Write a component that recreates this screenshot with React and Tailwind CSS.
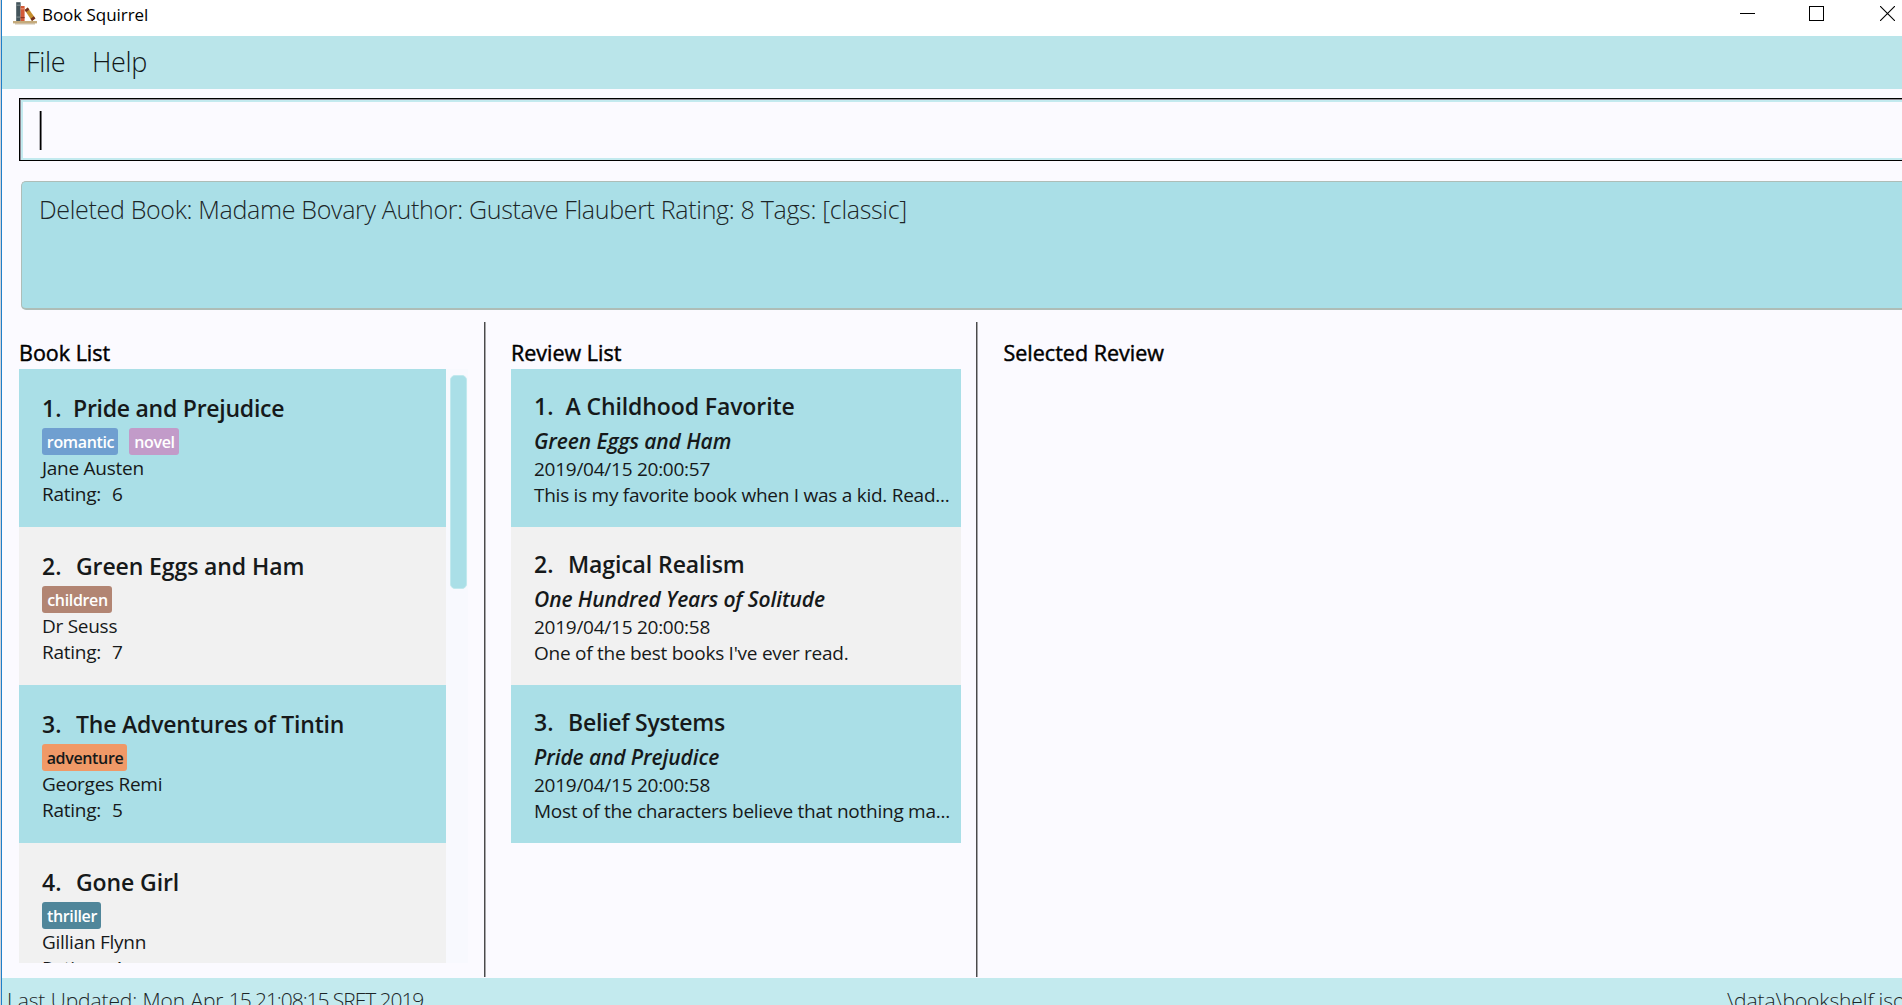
import React from "react";

const books = [
  {
    id: 1,
    title: "Pride and Prejudice",
    titleStyle: "tracking-[-0.25px]",
    author: "Jane Austen",
    rating: 6,
    tags: [
      { name: "romantic", style: "w-[76px] bg-[#6f9fd0] text-white" },
      { name: "novel", style: "w-[50px] bg-[#c29bc9] text-white" },
    ],
  },
  {
    id: 2,
    title: "Green Eggs and Ham",
    titleStyle: "tracking-[-0.1px]",
    author: "Dr Seuss",
    rating: 7,
    tags: [{ name: "children", style: "w-[70px] bg-[#b28573] text-white" }],
  },
  {
    id: 3,
    title: "The Adventures of Tintin",
    titleStyle: "tracking-[-0.2px]",
    author: "Georges Remi",
    rating: 5,
    tags: [{ name: "adventure", style: "w-[85px] bg-[#f09967] text-[#16191a]" }],
  },
  {
    id: 4,
    title: "Gone Girl",
    titleStyle: "tracking-[-0.1px]",
    author: "Gillian Flynn",
    rating: 4,
    tags: [{ name: "thriller", style: "w-[59px] bg-[#50869a] text-white" }],
  },
];

const reviews = [
  {
    id: 1,
    title: "A Childhood Favorite",
    titleStyle: "tracking-[-0.1px]",
    book: "Green Eggs and Ham",
    date: "2019/04/15 20:00:57",
    text: "This is my favorite book when I was a kid. Read...",
  },
  {
    id: 2,
    title: "Magical Realism",
    titleStyle: "tracking-[-0.1px]",
    book: "One Hundred Years of Solitude",
    date: "2019/04/15 20:00:58",
    text: "One of the best books I've ever read.",
  },
  {
    id: 3,
    title: "Belief Systems",
    titleStyle: "tracking-[-0.25px]",
    book: "Pride and Prejudice",
    date: "2019/04/15 20:00:58",
    text: "Most of the characters believe that nothing ma...",
  },
];

function rowColor(index) {
  return index % 2 === 0 ? "bg-[#aadfe7]" : "bg-[#f1f1f1]";
}

function BookshelfIcon() {
  return (
    <svg className="h-6 w-6 shrink-0" viewBox="0 0 24 24">
      <rect x="0" y="20" width="24" height="2.4" fill="#c5ab7c" />
      <rect x="2" y="22.4" width="20" height="1" fill="#a9936d" opacity="0.7" />
      <rect x="3.2" y="1.2" width="4.4" height="18.8" fill="#43545b" />
      <rect x="3.2" y="3.6" width="4.4" height="1.2" fill="#78878b" />
      <rect x="3.2" y="15.5" width="4.4" height="1.2" fill="#78878b" />
      <rect x="7.6" y="5" width="4" height="15" fill="#d35a36" />
      <rect x="7.6" y="7.2" width="4" height="1.2" fill="#e89072" />
      <rect x="7.6" y="16" width="4" height="1.2" fill="#8e3522" />
      <path d="M11.6 9 14.8 6.6l7.6 10.8-3.4 2.5z" fill="#c58f2e" />
      <path d="M11.6 9 14.8 6.6l1.5 2.2-3.1 2.3zM17.5 17.7l3.4-2.4 1.5 2.1-3.4 2.5z" fill="#73301f" />
    </svg>
  );
}

function TitleBar() {
  return (
    <div className="flex h-9 shrink-0 justify-between bg-white pl-[11px]">
      <div className="flex items-start">
        <div className="pt-px">
          <BookshelfIcon />
        </div>
        <span className="ml-[5px] text-[17px] leading-[29px] tracking-[-0.05px] text-black">Book Squirrel</span>
      </div>
      <div className="mr-[7px] flex gap-[54px] pt-[6px]">
        <svg className="h-[15px] w-[15px]" viewBox="0 0 15 15" shapeRendering="crispEdges">
          <rect x="0" y="7" width="15" height="1" fill="#000" />
        </svg>
        <svg className="h-[15px] w-[15px]" viewBox="0 0 15 15" shapeRendering="crispEdges">
          <rect x="0.5" y="0.5" width="14" height="14" fill="none" stroke="#000" />
        </svg>
        <svg className="ml-[2px] h-[15px] w-[15px]" viewBox="0 0 15 15">
          <path d="M0 0 15 15M15 0 0 15" stroke="#000" strokeWidth="1.1" />
        </svg>
      </div>
    </div>
  );
}

function PanelTitle({ children }) {
  return (
    <h2 className="h-[30px] text-[21.5px] leading-7 font-normal text-black [-webkit-text-stroke:0.45px_#000]">
      {children}
    </h2>
  );
}

function BookRow({ book, index }) {
  return (
    <div className={`h-[158px] shrink-0 pt-[23px] pl-[23px] text-[#16191a] ${rowColor(index)}`}>
      <div className="flex text-[23px] leading-8 font-semibold">
        <span className={book.id === 1 ? "w-[31px]" : "w-[34px]"}>{book.id}.</span>
        <span className={book.titleStyle}>{book.title}</span>
      </div>
      <div className="mt-1 flex gap-[11px]">
        {book.tags.map((tag) => (
          <span
            key={tag.name}
            className={`h-[27px] rounded-[3px] pl-px text-center text-[16px] leading-7 font-semibold tracking-[-0.35px] ${tag.style}`}
          >
            {tag.name}
          </span>
        ))}
      </div>
      <div className="text-[19px] leading-[26px] tracking-[-0.27px]">
        <div>{book.author}</div>
        <div className="flex">
          <span className="w-[70px]">Rating:</span>
          <span>{book.rating}</span>
        </div>
      </div>
    </div>
  );
}

function ReviewRow({ review, index }) {
  return (
    <div className={`h-[158px] shrink-0 pt-[21px] pl-[23px] text-[#16191a] ${rowColor(index)}`}>
      <div className="flex text-[23px] leading-8 font-semibold">
        <span className={review.id === 1 ? "w-[31.5px]" : "w-[34px]"}>{review.id}.</span>
        <span className={review.titleStyle}>{review.title}</span>
      </div>
      <div className="mt-[5px] text-[21px] leading-7 font-semibold tracking-[-0.1px] italic">{review.book}</div>
      <div className="mt-px text-[19px] leading-[26px] tracking-[-0.26px] whitespace-nowrap">
        <div>{review.date}</div>
        <div>{review.text}</div>
      </div>
    </div>
  );
}

export default function App() {
  return (
    <div className="flex h-[1005px] w-[1902px] overflow-hidden bg-[#fbfaff] font-['Open_Sans','Noto_Sans',sans-serif]">
      <div className="w-px shrink-0 bg-[#d0d1d6]" />
      <div className="w-px shrink-0 bg-[#1f7fc9]" />
      <div className="flex min-w-0 flex-1 flex-col">
        <TitleBar />
        <nav className="flex h-[53px] shrink-0 bg-[#bae5ea] pl-6 text-[27px] leading-[51px] font-light tracking-[-0.35px] text-[#111819]">
          <span className="w-[66px]">File</span>
          <span>Help</span>
        </nav>

        <div className="mt-[9px] ml-[17px] h-[63px] shrink-0 border-y border-l border-black">
          <div className="h-full border-t border-l border-t-[#8f8a94] border-l-[#8f8a94]">
            <div className="h-full border-y-2 border-l-2 border-[#c3eaef] pt-[9px] pl-[16px]">
              <div className="h-[39px] w-[3px] border-x border-l-[#b5b4b8] border-r-[#77767a] bg-black" />
            </div>
          </div>
        </div>

        <div className="mt-5 ml-[19px] h-[129px] shrink-0 rounded-l-[5px] border-y-[1.5px] border-b-2 border-l-[1.5px] border-[#aebdb7] bg-[#aadfe7] pt-[9px] pl-[17px]">
          <p className="text-[25px] leading-9 font-light tracking-[-0.32px] whitespace-nowrap text-[#1c2628]">
            Deleted Book: Madame Bovary Author: Gustave Flaubert Rating: 8 Tags: [classic]
          </p>
        </div>

        <main className="mt-3 mb-px flex h-[655px] shrink-0">
          <section className="w-[482px] shrink-0 pt-[17px] pl-[17px]">
            <PanelTitle>Book List</PanelTitle>
            <div className="flex h-[594px] w-[449px] overflow-hidden bg-[#f8f9fe]">
              <div className="flex h-full w-[427px] flex-col overflow-hidden">
                {books.map((book, i) => (
                  <BookRow key={book.id} book={book} index={i} />
                ))}
              </div>
              <div className="mt-[6px] ml-1 h-[214px] w-[17px] rounded-[5px] border border-[#c2e9ee] bg-[#aadfe7]" />
            </div>
          </section>
          <div className="w-[2px] shrink-0 border-r border-l border-r-[#a5a5a8] border-l-[#4a4a4c]" />
          <section className="w-[490px] shrink-0 pt-[17px] pl-[25px]">
            <PanelTitle>Review List</PanelTitle>
            <div className="flex w-[450px] flex-col">
              {reviews.map((review, i) => (
                <ReviewRow key={review.id} review={review} index={i} />
              ))}
            </div>
          </section>
          <div className="w-[2px] shrink-0 border-r border-l border-r-[#a5a5a8] border-l-[#4a4a4c]" />
          <section className="flex-1 pt-[17px] pl-[25.5px]">
            <PanelTitle>Selected Review</PanelTitle>
          </section>
        </main>

        <footer className="flex h-[27px] shrink-0 justify-between overflow-hidden bg-[#c3eaee] text-[21px] leading-[44px] font-light whitespace-nowrap text-[#1c2628]">
          <span className="pl-[5px] tracking-[-0.1px]">
            Last Updated: Mon Apr <span className="tracking-[-1.06px]">15 21:08:15 SRET 2019</span>
          </span>
          <span className="w-[175px] tracking-[-0.1px]">\data\bookshelf.json</span>
        </footer>
      </div>
    </div>
  );
}
